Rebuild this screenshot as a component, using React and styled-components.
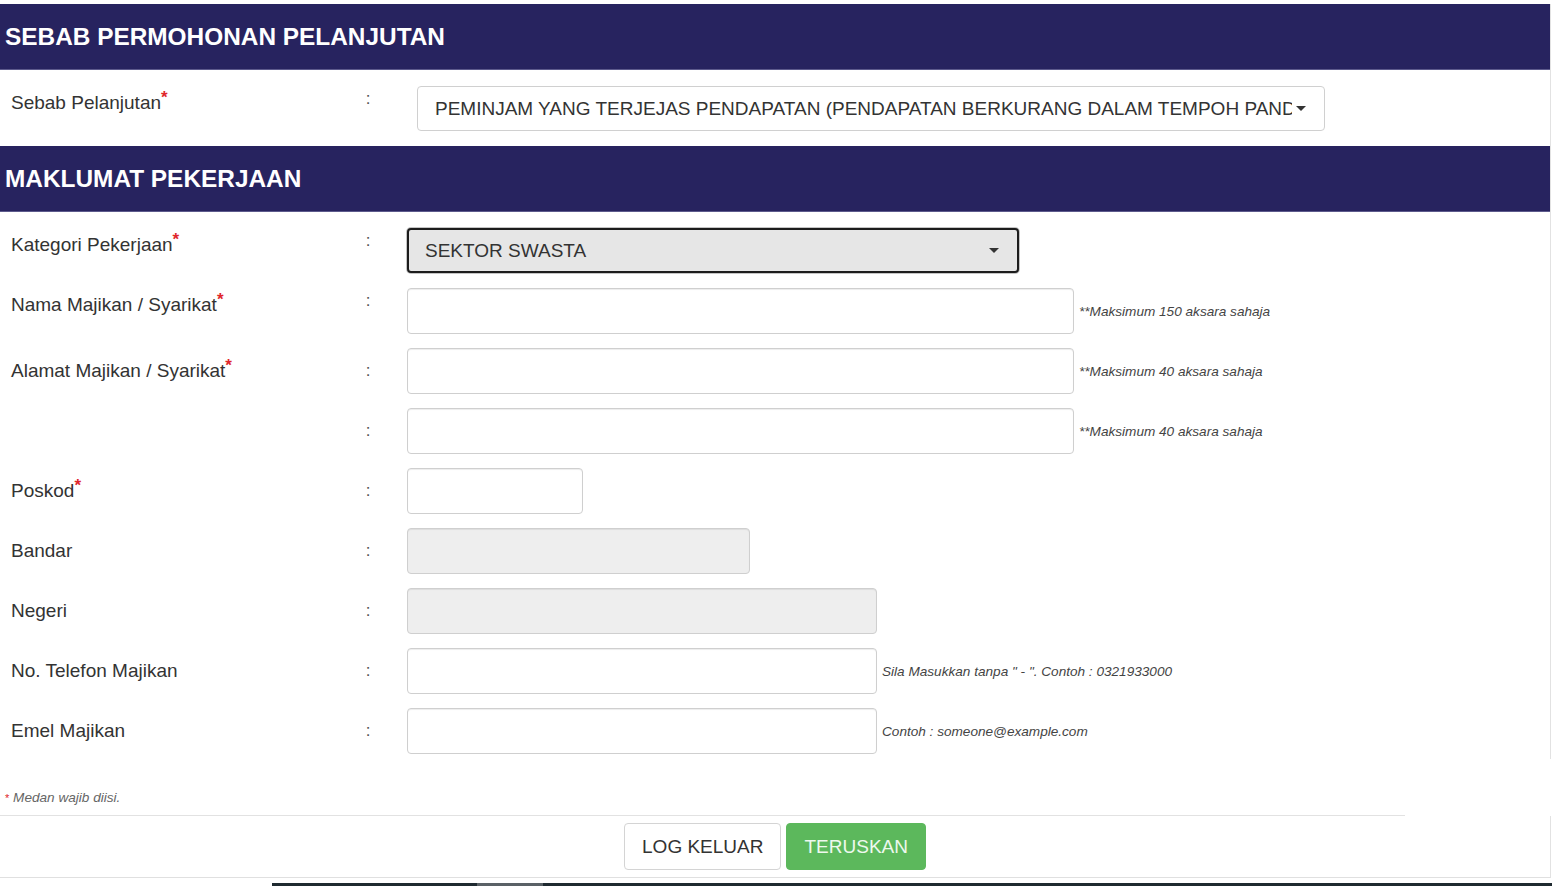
import React from 'react';
import styled, { createGlobalStyle } from 'styled-components';

const GlobalStyle = createGlobalStyle`
    body{
        margin: 0;
        background: #fff;
        font-family: 'Liberation Sans', Arial, sans-serif;
        color: #333;
    }
`

const App = () =>{
    return(
        <Page>
            <GlobalStyle />
            <Panel>
                <SectionHeader>SEBAB PERMOHONAN PELANJUTAN</SectionHeader>
                <Section $pad='16px 0 14px'>
                    <Row>
                        <Label $top>Sebab Pelanjutan<Req>*</Req></Label>
                        <Colon $top>:</Colon>
                        <Select $offset={42} $width={908}>
                            <SelectText $width={857}>PEMINJAM YANG TERJEJAS PENDAPATAN (PENDAPATAN BERKURANG DALAM TEMPOH PANDEMIK COVID-19)</SelectText>
                            <Caret />
                        </Select>
                    </Row>
                </Section>
                <SectionHeader>MAKLUMAT PEKERJAAN</SectionHeader>
                <Section $pad='16px 0 5px'>
                    <Row>
                        <Label $top>Kategori Pekerjaan<Req>*</Req></Label>
                        <Colon $top>:</Colon>
                        <Select $offset={32} $width={612} $focused>
                            <SelectText>SEKTOR SWASTA</SelectText>
                            <Caret />
                        </Select>
                    </Row>
                    <Row>
                        <Label $top>Nama Majikan / Syarikat<Req>*</Req></Label>
                        <Colon $top>:</Colon>
                        <Input $width={667} />
                        <Hint $gap={5}>**Maksimum 150 aksara sahaja</Hint>
                    </Row>
                    <Row>
                        <Label>Alamat Majikan / Syarikat<Req>*</Req></Label>
                        <Colon>:</Colon>
                        <Input $width={667} />
                        <Hint $gap={5}>**Maksimum 40 aksara sahaja</Hint>
                    </Row>
                    <Row>
                        <Label></Label>
                        <Colon>:</Colon>
                        <Input $width={667} />
                        <Hint $gap={5}>**Maksimum 40 aksara sahaja</Hint>
                    </Row>
                    <Row>
                        <Label>Poskod<Req>*</Req></Label>
                        <Colon>:</Colon>
                        <Input $width={176} />
                    </Row>
                    <Row>
                        <Label>Bandar</Label>
                        <Colon>:</Colon>
                        <Input $width={343} disabled />
                    </Row>
                    <Row>
                        <Label>Negeri</Label>
                        <Colon>:</Colon>
                        <Input $width={470} disabled />
                    </Row>
                    <Row>
                        <Label>No. Telefon Majikan</Label>
                        <Colon>:</Colon>
                        <Input $width={470} />
                        <Hint $gap={5}>Sila Masukkan tanpa " - ". Contoh : 0321933000</Hint>
                    </Row>
                    <Row>
                        <Label>Emel Majikan</Label>
                        <Colon>:</Colon>
                        <Input $width={470} />
                        <Hint $gap={5}>Contoh : someone@example.com</Hint>
                    </Row>
                </Section>
            </Panel>
            <Note><NoteStar>*</NoteStar> Medan wajib diisi.</Note>
            <Divider />
            <Actions>
                <Button>LOG KELUAR</Button>
                <Button $primary>TERUSKAN</Button>
            </Actions>
            <BottomBar />
        </Page>
    )
}

export default App

const Page = styled.div`
    width: 1551px;
    padding-top: 4px;
`

const Panel = styled.div`
    border-right: 1px solid #e2e2e2;
`

const SectionHeader = styled.div`
    height: 66px;
    display: flex;
    align-items: center;
    padding-left: 5px;
    background: #27235f;
    color: #fff;
    font-weight: 700;
    font-size: 24.4px;
    border-bottom: 1px solid #5d5a8c;
    box-sizing: border-box;
`

const Section = styled.div`
    padding: ${p => p.$pad};
    display: flex;
    flex-direction: column;
    gap: 14px;
`

const Row = styled.div`
    display: flex;
    align-items: flex-start;
    min-height: 46px;
`

const Label = styled.div`
    width: 350px;
    padding: ${p => p.$top ? '6px' : '12px'} 0 0 11px;
    font-size: 19px;
    line-height: 22px;
    color: #333;
    white-space: nowrap;
`

const Req = styled.sup`
    color: #e0262b;
    font-size: 17px;
    font-weight: 700;
    vertical-align: 0;
    position: relative;
    top: -6px;
`

const Colon = styled.div`
    width: 14px;
    padding-top: ${p => p.$top ? '2px' : '12px'};
    font-size: 17px;
    line-height: 22px;
    color: #555;
    text-align: center;
`

const Select = styled.div`
    margin-left: ${p => p.$offset}px;
    width: ${p => p.$width}px;
    height: 45px;
    box-sizing: border-box;
    display: flex;
    align-items: center;
    padding: 0 18px 0 ${p => p.$focused ? 16 : 17}px;
    border: ${p => p.$focused ? '2px solid #1c1c1c' : '1px solid #d0d0d0'};
    border-radius: 4px;
    background: ${p => p.$focused ? '#e6e6e6' : '#fff'};
    box-shadow: ${p => p.$focused ? '0 0 0 1px #c4c4c4' : 'none'};
    font-size: 19px;
    color: #333;
`

const SelectText = styled.span`
    flex: ${p => p.$width ? `0 0 ${p.$width}px` : '1'};
    overflow: hidden;
    white-space: nowrap;
`

const Caret = styled.span`
    margin-left: auto;
    width: 0;
    height: 0;
    border-top: 5px solid #333;
    border-left: 5px solid transparent;
    border-right: 5px solid transparent;
`

const Input = styled.input`
    margin: 0 0 0 32px;
    width: ${p => p.$width}px;
    height: 46px;
    box-sizing: border-box;
    border: 1px solid #cfcfcf;
    border-radius: 4px;
    background: #fff;
    box-shadow: inset 0 1px 1px rgba(0,0,0,.075);
    outline: none;
    font: 19px 'Liberation Sans', Arial, sans-serif;

    &:disabled{
        background: #eeeeee;
    }
`

const Hint = styled.span`
    margin-left: ${p => p.$gap}px;
    align-self: center;
    font-size: 13.6px;
    font-style: italic;
    color: #444;
    white-space: nowrap;
`

const Note = styled.div`
    padding: 31px 0 0 5px;
    height: 25px;
    font-size: 13.6px;
    font-style: italic;
    color: #666;
`

const NoteStar = styled.span`
    color: #e0262b;
    font-size: 11px;
    font-style: normal;
`

const Divider = styled.div`
    width: 1405px;
    height: 1px;
    background: #e2e2e2;
`

const Actions = styled.div`
    display: flex;
    justify-content: center;
    gap: 5px;
    padding: 7px 0 7px;
    border-bottom: 1px solid #e0e0e0;
    border-right: 1px solid #e2e2e2;
`

const Button = styled.button`
    height: 47px;
    padding: 0 17px;
    border: 1px solid ${p => p.$primary ? '#5cb85c' : '#d4d4d4'};
    border-radius: 4px;
    background: ${p => p.$primary ? '#5cb85c' : '#fff'};
    color: ${p => p.$primary ? '#eef8ee' : '#333'};
    font: 19px 'Liberation Sans', Arial, sans-serif;
`

const BottomBar = styled.div`
    margin: 5px 0 0 272px;
    width: 1280px;
    height: 3px;
    background: linear-gradient(to right, #1f2a30 0, #1f2a30 205px, #5a6166 205px, #5a6166 271px, #1f2a30 271px);
`
